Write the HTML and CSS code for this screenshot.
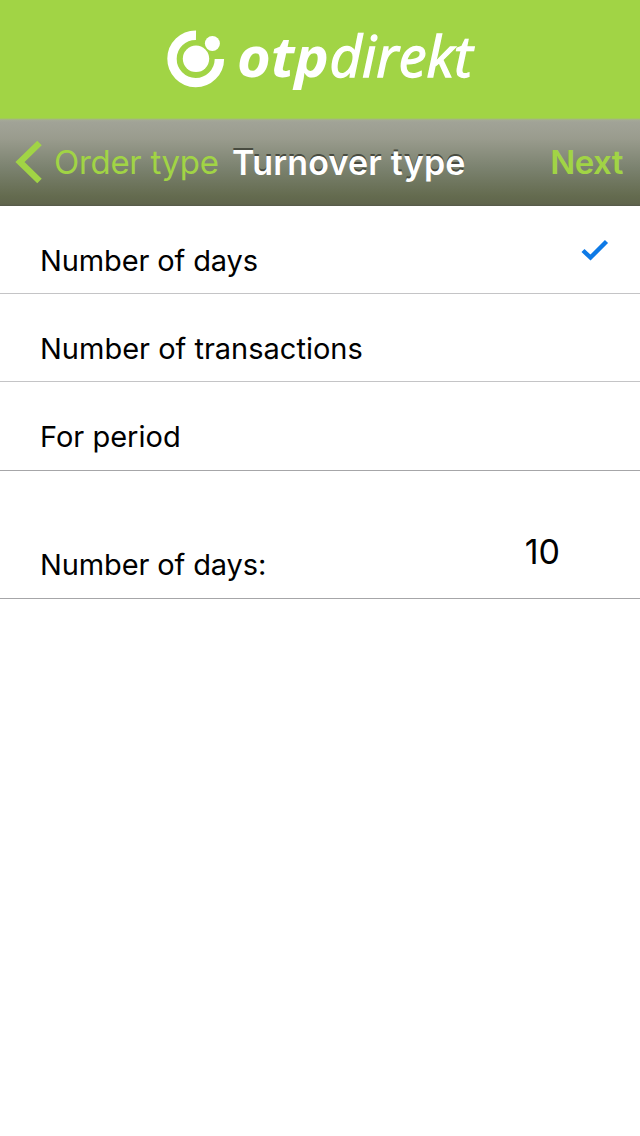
FILE: index.html
```html
<!DOCTYPE html>
<html lang="en">
<head>
<meta charset="utf-8">
<title>Turnover type</title>
<link rel="stylesheet" href="styles.css">
</head>
<body>
<header class="brand">
  <svg class="logo" width="640" height="118" viewBox="0 0 640 118" role="img" aria-label="otpdirekt">
    <path class="ring" d="M196 35.2 A23.7 23.7 0 1 0 219.4 59"/>
    <circle cx="196" cy="58.8" r="13.2"/>
    <circle cx="212.4" cy="43.5" r="7.5"/>
    <text class="logo-bold" x="237" y="76.5" textLength="92" lengthAdjust="spacingAndGlyphs">otp</text>
    <text class="logo-light" x="329.5" y="76.5" textLength="143" lengthAdjust="spacingAndGlyphs">direkt</text>
  </svg>
</header>
<nav class="bar">
  <a class="back">
    <svg width="28" height="44" viewBox="0 0 28 44"><path d="M24.5 3 L5 22 L24.5 41"/></svg>
    <span class="back-label">Order type</span>
  </a>
  <h1 class="title">Turnover type</h1>
  <a class="next">Next</a>
</nav>
<main>
  <ul class="options">
    <li class="row"><span class="label">Number of days</span>
      <svg class="check" width="28" height="22" viewBox="0 0 28 22"><path d="M2 11.5 L9.5 18.5 L25.5 2.5"/></svg>
    </li>
    <li class="row"><span>Number of transactions</span></li>
    <li class="row last"><span>For period</span></li>
  </ul>
  <div class="field">
    <span class="label">Number of days:</span>
    <span class="value">10</span>
  </div>
</main>
</body>
</html>
```

FILE: styles.css
```css
* { box-sizing: border-box; }
body {
  margin: 0;
  min-height: 1136px;
  background: #fff;
  color: #000;
  font-family: Inter, "Liberation Sans", sans-serif;
}
.brand { height: 118px; background: #a1d445; }
.logo { display: block; fill: #fff; overflow: visible; }
.ring { fill: none; stroke: #fff; stroke-width: 9.4; }
.logo-bold, .logo-light {
  font-family: "Open Sans", "Noto Sans", sans-serif;
  font-style: italic;
  font-size: 56px;
}
.logo-bold { font-weight: 700; }
.logo-light { font-weight: 400; stroke: #fff; stroke-width: 1.3; }
.bar {
  display: flex;
  align-items: center;
  height: 88px;
  padding: 0 17px 0 15px;
  background: linear-gradient(#a1d445 0, #a3be72 1px, #a4a996 2px, #a1a397 4px, #9a9c8e 20px, #7b826f 50px, #646b4f 78px, #60654c 86px, #55594a 88px);
  color: #a1d445;
  font-size: 33px;
  line-height: 88px;
}
.back { display: flex; align-items: center; width: 217px; }
.back svg { flex: none; fill: none; stroke: #a1d445; stroke-width: 6.4; }
.back-label { margin-left: 11px; letter-spacing: -0.3px; white-space: nowrap; }
.title {
  margin: 0;
  padding-top: 1px;
  color: #fff;
  font-size: 34px;
  font-weight: 600;
  letter-spacing: 0.2px;
  line-height: 87px;
  white-space: nowrap;
  text-shadow: 0 -2px 0 #484b40;
}
.next { margin-left: auto; font-weight: 600; letter-spacing: -0.5px; }
.options { margin: 0; padding: 0; list-style: none; }
.row {
  display: flex;
  justify-content: space-between;
  height: 88px;
  padding: 22px 31px 0 40px;
  border-bottom: 1px solid #c4c4c6;
  font-size: 29px;
  line-height: 65px;
}
.last { height: 89px; border-bottom-color: #a6a6a8; }
.label { letter-spacing: -0.12px; }
.check { margin-top: 11px; fill: none; stroke: #0e7ae6; stroke-width: 4.4; }
.field {
  display: flex;
  justify-content: space-between;
  height: 128px;
  padding: 61px 80px 0 40px;
  border-bottom: 1px solid #a6a6a8;
  font-size: 29px;
  line-height: 65px;
}
.value { font-size: 34px; line-height: 40px; }
```
